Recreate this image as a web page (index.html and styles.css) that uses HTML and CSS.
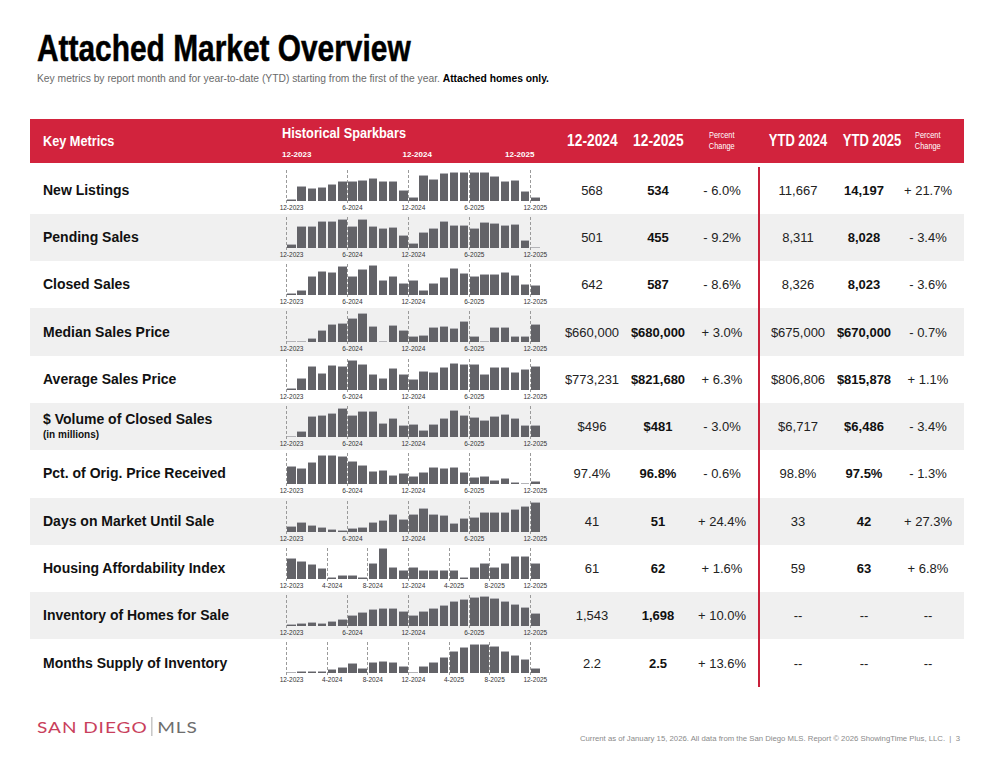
FILE: index.html
```html
<!DOCTYPE html>
<html lang="en">
<head>
<meta charset="utf-8">
<title>Attached Market Overview</title>
<link rel="stylesheet" href="styles.css">
</head>
<body>
<div class="page">
  <h1 class="title"><span>Attached Market Overview</span></h1>
  <p class="subtitle">Key metrics by report month and for year-to-date (YTD) starting from the first of the year. <b>Attached homes only.</b></p>

  <div class="table">
    <div class="grid thead">
      <div class="th-key"><span class="cx">Key Metrics</span></div>
      <div class="th-spark">
        <div class="th-spark-title"><span class="cx">Historical Sparkbars</span></div>
        <div class="th-ticks"><span>12-2023</span><span>12-2024</span><span>12-2025</span></div>
      </div>
      <div class="th-col"><span class="cx">12-2024</span></div>
      <div class="th-col"><span class="cx">12-2025</span></div>
      <div class="th-pct"><span class="cx">Percent<br>Change</span></div>
      <div></div><div></div>
      <div class="th-col ytd"><span class="cx">YTD 2024</span></div>
      <div class="th-col ytd"><span class="cx">YTD 2025</span></div>
      <div class="th-pct"><span class="cx">Percent<br>Change</span></div>
    </div>

    <div class="tbody">
      <div class="grid row">
        <div class="name">New Listings</div>
        <div class="spark">
          <div class="bars"><span class="m" style="height:1.7px"></span><span style="height:15px"></span><span style="height:13px"></span><span style="height:14px"></span><span style="height:16.7px"></span><span style="height:19.3px"></span><span class="m" style="height:19.3px"></span><span style="height:20.3px"></span><span style="height:22.7px"></span><span style="height:19.3px"></span><span style="height:20px"></span><span style="height:10.7px"></span><span class="m" style="height:4px"></span><span style="height:26px"></span><span style="height:21.7px"></span><span style="height:28px"></span><span style="height:28.3px"></span><span style="height:29px"></span><span class="m" style="height:29px"></span><span style="height:28.7px"></span><span style="height:24.3px"></span><span style="height:20px"></span><span style="height:20.7px"></span><span style="height:10px"></span><span class="m" style="height:3.3px"></span></div>
          <div class="ticks"><span class="t0">12-2023</span><span class="t6">6-2024</span><span class="t12">12-2024</span><span class="t18">6-2025</span><span class="t24">12-2025</span></div>
        </div>
        <div class="v">568</div><div class="v b">534</div><div class="v">- 6.0%</div><div></div><div class="vline"></div><div class="v">11,667</div><div class="v b">14,197</div><div class="v">+ 21.7%</div>
      </div>

      <div class="grid row">
        <div class="name">Pending Sales</div>
        <div class="spark">
          <div class="bars"><span class="m" style="height:3.7px"></span><span style="height:21.7px"></span><span style="height:22px"></span><span style="height:26.7px"></span><span style="height:27.3px"></span><span style="height:29px"></span><span class="m" style="height:21.7px"></span><span style="height:29.3px"></span><span style="height:22px"></span><span style="height:20px"></span><span style="height:20.7px"></span><span style="height:13.3px"></span><span class="m" style="height:5.3px"></span><span style="height:16.3px"></span><span style="height:20.3px"></span><span style="height:27.3px"></span><span style="height:23px"></span><span style="height:23px"></span><span class="m" style="height:20.3px"></span><span style="height:26px"></span><span style="height:25.3px"></span><span style="height:23px"></span><span style="height:23.7px"></span><span style="height:8px"></span><span class="m" style="height:1.3px"></span></div>
          <div class="ticks"><span class="t0">12-2023</span><span class="t6">6-2024</span><span class="t12">12-2024</span><span class="t18">6-2025</span><span class="t24">12-2025</span></div>
        </div>
        <div class="v">501</div><div class="v b">455</div><div class="v">- 9.2%</div><div></div><div class="vline"></div><div class="v">8,311</div><div class="v b">8,028</div><div class="v">- 3.4%</div>
      </div>

      <div class="grid row">
        <div class="name">Closed Sales</div>
        <div class="spark">
          <div class="bars"><span class="m" style="height:2px"></span><span style="height:5px"></span><span style="height:19.3px"></span><span style="height:23.7px"></span><span style="height:22.7px"></span><span style="height:29.3px"></span><span class="m" style="height:19px"></span><span style="height:26px"></span><span style="height:29.7px"></span><span style="height:15.3px"></span><span style="height:18.7px"></span><span style="height:12px"></span><span class="m" style="height:14.7px"></span><span style="height:5px"></span><span style="height:12px"></span><span style="height:17.7px"></span><span style="height:26.7px"></span><span style="height:21.7px"></span><span class="m" style="height:19px"></span><span style="height:20.7px"></span><span style="height:21.3px"></span><span style="height:23px"></span><span style="height:20.3px"></span><span style="height:10.7px"></span><span class="m" style="height:9.7px"></span></div>
          <div class="ticks"><span class="t0">12-2023</span><span class="t6">6-2024</span><span class="t12">12-2024</span><span class="t18">6-2025</span><span class="t24">12-2025</span></div>
        </div>
        <div class="v">642</div><div class="v b">587</div><div class="v">- 8.6%</div><div></div><div class="vline"></div><div class="v">8,326</div><div class="v b">8,023</div><div class="v">- 3.6%</div>
      </div>

      <div class="grid row">
        <div class="name">Median Sales Price</div>
        <div class="spark">
          <div class="bars"><span class="m" style="height:1.7px"></span><span style="height:1.7px"></span><span style="height:4.3px"></span><span style="height:12.7px"></span><span style="height:18.3px"></span><span style="height:19.7px"></span><span class="m" style="height:24.7px"></span><span style="height:29.3px"></span><span style="height:16px"></span><span style="height:1.7px"></span><span style="height:17.7px"></span><span style="height:12.7px"></span><span class="m" style="height:6.7px"></span><span style="height:7.7px"></span><span style="height:15.3px"></span><span style="height:16.7px"></span><span style="height:14px"></span><span style="height:21px"></span><span class="m" style="height:6.7px"></span><span style="height:1.7px"></span><span style="height:15.3px"></span><span style="height:15.3px"></span><span style="height:6.7px"></span><span style="height:6.7px"></span><span class="m" style="height:18.3px"></span></div>
          <div class="ticks"><span class="t0">12-2023</span><span class="t6">6-2024</span><span class="t12">12-2024</span><span class="t18">6-2025</span><span class="t24">12-2025</span></div>
        </div>
        <div class="v">$660,000</div><div class="v b">$680,000</div><div class="v">+ 3.0%</div><div></div><div class="vline"></div><div class="v">$675,000</div><div class="v b">$670,000</div><div class="v">- 0.7%</div>
      </div>

      <div class="grid row">
        <div class="name">Average Sales Price</div>
        <div class="spark">
          <div class="bars"><span class="m" style="height:2px"></span><span style="height:11.7px"></span><span style="height:24px"></span><span style="height:17px"></span><span style="height:24.3px"></span><span style="height:24px"></span><span class="m" style="height:29.7px"></span><span style="height:25.7px"></span><span style="height:15.3px"></span><span style="height:12px"></span><span style="height:22px"></span><span style="height:15.3px"></span><span class="m" style="height:10.7px"></span><span style="height:19px"></span><span style="height:17.7px"></span><span style="height:23px"></span><span style="height:27px"></span><span style="height:26px"></span><span class="m" style="height:25.7px"></span><span style="height:15.7px"></span><span style="height:22.3px"></span><span style="height:23px"></span><span style="height:18px"></span><span style="height:21px"></span><span class="m" style="height:23.7px"></span></div>
          <div class="ticks"><span class="t0">12-2023</span><span class="t6">6-2024</span><span class="t12">12-2024</span><span class="t18">6-2025</span><span class="t24">12-2025</span></div>
        </div>
        <div class="v">$773,231</div><div class="v b">$821,680</div><div class="v">+ 6.3%</div><div></div><div class="vline"></div><div class="v">$806,806</div><div class="v b">$815,878</div><div class="v">+ 1.1%</div>
      </div>

      <div class="grid row">
        <div class="name">$ Volume of Closed Sales<small>(in millions)</small></div>
        <div class="spark">
          <div class="bars"><span class="m" style="height:1.3px"></span><span style="height:5.7px"></span><span style="height:20.7px"></span><span style="height:22.3px"></span><span style="height:23.7px"></span><span style="height:29.3px"></span><span class="m" style="height:21.7px"></span><span style="height:26.3px"></span><span style="height:26.3px"></span><span style="height:13.7px"></span><span style="height:19.3px"></span><span style="height:12.3px"></span><span class="m" style="height:13.3px"></span><span style="height:6.7px"></span><span style="height:12.7px"></span><span style="height:18.7px"></span><span style="height:27px"></span><span style="height:22.3px"></span><span class="m" style="height:20px"></span><span style="height:17.3px"></span><span style="height:21.3px"></span><span style="height:22.7px"></span><span style="height:19.3px"></span><span style="height:12px"></span><span class="m" style="height:12px"></span></div>
          <div class="ticks"><span class="t0">12-2023</span><span class="t6">6-2024</span><span class="t12">12-2024</span><span class="t18">6-2025</span><span class="t24">12-2025</span></div>
        </div>
        <div class="v">$496</div><div class="v b">$481</div><div class="v">- 3.0%</div><div></div><div class="vline"></div><div class="v">$6,717</div><div class="v b">$6,486</div><div class="v">- 3.4%</div>
      </div>

      <div class="grid row">
        <div class="name">Pct. of Orig. Price Received</div>
        <div class="spark">
          <div class="bars"><span class="m" style="height:18.7px"></span><span style="height:16px"></span><span style="height:22.7px"></span><span style="height:29px"></span><span style="height:29.3px"></span><span style="height:28.7px"></span><span class="m" style="height:23px"></span><span style="height:19.7px"></span><span style="height:13px"></span><span style="height:14px"></span><span style="height:9.7px"></span><span style="height:11.7px"></span><span class="m" style="height:8.3px"></span><span style="height:12.3px"></span><span style="height:17.3px"></span><span style="height:16.3px"></span><span style="height:17.3px"></span><span style="height:12px"></span><span class="m" style="height:7px"></span><span style="height:8.7px"></span><span style="height:4.3px"></span><span style="height:6px"></span><span style="height:2.3px"></span><span style="height:1px"></span><span class="m" style="height:3.7px"></span></div>
          <div class="ticks"><span class="t0">12-2023</span><span class="t6">6-2024</span><span class="t12">12-2024</span><span class="t18">6-2025</span><span class="t24">12-2025</span></div>
        </div>
        <div class="v">97.4%</div><div class="v b">96.8%</div><div class="v">- 0.6%</div><div></div><div class="vline"></div><div class="v">98.8%</div><div class="v b">97.5%</div><div class="v">- 1.3%</div>
      </div>

      <div class="grid row">
        <div class="name">Days on Market Until Sale</div>
        <div class="spark">
          <div class="bars"><span class="m" style="height:6px"></span><span style="height:9.3px"></span><span style="height:6.3px"></span><span style="height:4.7px"></span><span style="height:3px"></span><span style="height:1.3px"></span><span class="m" style="height:3.3px"></span><span style="height:5px"></span><span style="height:9.3px"></span><span style="height:11.3px"></span><span style="height:17.3px"></span><span style="height:13px"></span><span class="m" style="height:17.3px"></span><span style="height:24px"></span><span style="height:17.7px"></span><span style="height:16.3px"></span><span style="height:8.7px"></span><span style="height:14px"></span><span class="m" style="height:14.7px"></span><span style="height:19.3px"></span><span style="height:19.7px"></span><span style="height:19.3px"></span><span style="height:22.3px"></span><span style="height:25.7px"></span><span class="m" style="height:29.3px"></span></div>
          <div class="ticks"><span class="t0">12-2023</span><span class="t6">6-2024</span><span class="t12">12-2024</span><span class="t18">6-2025</span><span class="t24">12-2025</span></div>
        </div>
        <div class="v">41</div><div class="v b">51</div><div class="v">+ 24.4%</div><div></div><div class="vline"></div><div class="v">33</div><div class="v b">42</div><div class="v">+ 27.3%</div>
      </div>

      <div class="grid row">
        <div class="name">Housing Affordability Index</div>
        <div class="spark">
          <div class="bars"><span class="m" style="height:20.7px"></span><span style="height:17.7px"></span><span style="height:14.7px"></span><span style="height:11.3px"></span><span class="m" style="height:1.7px"></span><span style="height:4.3px"></span><span style="height:4.3px"></span><span style="height:1.7px"></span><span class="m" style="height:15.7px"></span><span style="height:30.7px"></span><span style="height:12.3px"></span><span style="height:8.7px"></span><span class="m" style="height:12.3px"></span><span style="height:8.7px"></span><span style="height:8.7px"></span><span style="height:8.7px"></span><span class="m" style="height:8.7px"></span><span style="height:1.7px"></span><span style="height:12.3px"></span><span style="height:15.7px"></span><span class="m" style="height:12.3px"></span><span style="height:15.7px"></span><span style="height:23.3px"></span><span style="height:23.3px"></span><span class="m" style="height:15.7px"></span></div>
          <div class="ticks"><span class="t0">12-2023</span><span class="t4">4-2024</span><span class="t8">8-2024</span><span class="t12">12-2024</span><span class="t16">4-2025</span><span class="t20">8-2025</span><span class="t24">12-2025</span></div>
        </div>
        <div class="v">61</div><div class="v b">62</div><div class="v">+ 1.6%</div><div></div><div class="vline"></div><div class="v">59</div><div class="v b">63</div><div class="v">+ 6.8%</div>
      </div>

      <div class="grid row">
        <div class="name">Inventory of Homes for Sale</div>
        <div class="spark">
          <div class="bars"><span class="m" style="height:1.7px"></span><span style="height:3px"></span><span style="height:3.7px"></span><span style="height:3.3px"></span><span style="height:5px"></span><span style="height:7.3px"></span><span class="m" style="height:11px"></span><span style="height:13.7px"></span><span style="height:17.3px"></span><span style="height:18px"></span><span style="height:18px"></span><span style="height:15px"></span><span class="m" style="height:11px"></span><span style="height:15px"></span><span style="height:18px"></span><span style="height:21.3px"></span><span style="height:25px"></span><span style="height:27.3px"></span><span class="m" style="height:29.3px"></span><span style="height:29.7px"></span><span style="height:28px"></span><span style="height:25px"></span><span style="height:22.3px"></span><span style="height:19.3px"></span><span class="m" style="height:13px"></span></div>
          <div class="ticks"><span class="t0">12-2023</span><span class="t6">6-2024</span><span class="t12">12-2024</span><span class="t18">6-2025</span><span class="t24">12-2025</span></div>
        </div>
        <div class="v">1,543</div><div class="v b">1,698</div><div class="v">+ 10.0%</div><div></div><div class="vline"></div><div class="v">--</div><div class="v">--</div><div class="v">--</div>
      </div>

      <div class="grid row">
        <div class="name">Months Supply of Inventory</div>
        <div class="spark">
          <div class="bars"><span class="m" style="height:1px"></span><span style="height:2px"></span><span style="height:2.7px"></span><span style="height:2.7px"></span><span class="m" style="height:4px"></span><span style="height:6.3px"></span><span style="height:10.7px"></span><span style="height:5.7px"></span><span class="m" style="height:11.3px"></span><span style="height:12px"></span><span style="height:11.3px"></span><span style="height:7px"></span><span class="m" style="height:1px"></span><span style="height:7.3px"></span><span style="height:11.7px"></span><span style="height:16.7px"></span><span class="m" style="height:22.3px"></span><span style="height:26px"></span><span style="height:29px"></span><span style="height:29.7px"></span><span class="m" style="height:27.3px"></span><span style="height:22.7px"></span><span style="height:18.7px"></span><span style="height:14px"></span><span class="m" style="height:5px"></span></div>
          <div class="ticks"><span class="t0">12-2023</span><span class="t4">4-2024</span><span class="t8">8-2024</span><span class="t12">12-2024</span><span class="t16">4-2025</span><span class="t20">8-2025</span><span class="t24">12-2025</span></div>
        </div>
        <div class="v">2.2</div><div class="v b">2.5</div><div class="v">+ 13.6%</div><div></div><div class="vline"></div><div class="v">--</div><div class="v">--</div><div class="v">--</div>
      </div>
    </div>
  </div>

  <div class="footer">
    <div class="logo"><span class="sd">SAN DIEGO</span><span class="sep"></span><span class="mls">MLS</span></div>
    <div class="note">Current as of January 15, 2026. All data from the San Diego MLS. Report © 2026 ShowingTime Plus, LLC. &nbsp;|&nbsp; 3</div>
  </div>
</div>
</body>
</html>
```

FILE: styles.css
```css
* { box-sizing: border-box; }

body {
  margin: 0;
  background: #fff;
  font-family: "Liberation Sans", Arial, sans-serif;
  color: #222;
}

.page {
  width: 987px;
  height: 759px;
  padding-top: 30px;
  overflow: hidden;
}

.title {
  margin: 0 0 0 37px;
  font-size: 36px;
  line-height: 37px;
  font-weight: 700;
  color: #000;
  white-space: nowrap;
  -webkit-text-stroke: 0.5px #000;
}

.title span {
  display: inline-block;
  transform: scaleX(0.83);
  transform-origin: left center;
}

.cx {
  display: inline-block;
  transform: scaleX(0.85);
}

.subtitle {
  margin: 5.5px 0 0 37px;
  font-size: 10.3px;
  line-height: 12px;
  color: #6a6a6a;
}

.subtitle b { color: #000; }

.table {
  margin: 34.5px 0 0 30px;
  width: 934px;
}

.grid {
  display: grid;
  grid-template-columns: 250px 278px 68px 64px 64px 4px 2px 76px 56px 72px;
}

.thead {
  height: 44px;
  background: #d2233d;
  color: #fff;
  align-items: center;
  margin-bottom: 3.5px;
  font-weight: 700;
}

.th-key {
  padding-left: 13px;
  font-size: 15.5px;
}

.th-key .cx {
  transform: scaleX(0.82);
  transform-origin: left center;
}

.th-spark {
  align-self: stretch;
  padding: 6px 0 0 2px;
}

.th-spark-title {
  font-size: 15px;
  line-height: 16px;
  white-space: nowrap;
}

.th-spark-title .cx { transform-origin: left center; }

.th-ticks {
  display: grid;
  grid-template-columns: 120.5px 102.5px auto;
  margin-top: 9px;
  font-size: 8px;
  line-height: 10px;
}

.th-col {
  text-align: center;
  font-size: 16px;
  white-space: nowrap;
}

.th-col .cx { transform: scaleX(0.86); }

.th-col.ytd .cx { transform: scaleX(0.81); }

.th-pct {
  text-align: center;
  font-size: 9px;
  line-height: 11px;
  font-weight: 400;
}

.th-pct .cx { transform: scaleX(0.82); }

.row {
  height: 47.3px;
  align-items: center;
}

.tbody .row:nth-child(even) { background: #f0f0f0; }

.name {
  padding-left: 13px;
  font-size: 14px;
  line-height: 17px;
  font-weight: 700;
  color: #111;
}

.name small {
  display: block;
  font-size: 10px;
  line-height: 14px;
}

.spark {
  align-self: start;
  padding: 3px 0 0 7.3px;
}

.bars,
.ticks {
  display: grid;
  grid-template-columns: repeat(25, 8.5px);
  column-gap: 1.67px;
}

.bars {
  height: 31px;
  align-items: end;
}

.bars span {
  display: block;
  background: #636368;
  border-top: 1px solid #b4b4b8;
}

.bars .m { position: relative; }

.bars .m::before {
  content: "";
  position: absolute;
  left: -1.2px;
  bottom: -2px;
  height: 33px;
  border-left: 1px dashed #9a9a9a;
}

.ticks {
  margin-top: 3px;
  height: 8px;
  font-size: 6.5px;
  line-height: 8px;
  color: #333;
}

.ticks span {
  display: flex;
  justify-content: center;
  white-space: nowrap;
  grid-row: 1;
}

.ticks .t0 { grid-column: 1; }
.ticks .t4 { grid-column: 5; }
.ticks .t6 { grid-column: 7; }
.ticks .t8 { grid-column: 9; }
.ticks .t12 { grid-column: 13; }
.ticks .t16 { grid-column: 17; }
.ticks .t18 { grid-column: 19; }
.ticks .t20 { grid-column: 21; }
.ticks .t24 { grid-column: 25; }

.v {
  text-align: center;
  font-size: 13px;
  color: #222;
  white-space: nowrap;
}

.v.b {
  font-weight: 700;
  color: #111;
}

.vline {
  align-self: stretch;
  background: #c8203a;
}

.footer {
  display: flex;
  justify-content: space-between;
  align-items: flex-start;
  margin-top: 30px;
  padding: 0 27px 0 37px;
}

.logo {
  display: flex;
  align-items: center;
  height: 20px;
  font-family: "Lato", "Liberation Sans", sans-serif;
  font-weight: 400;
  font-size: 16px;
  line-height: 20px;
  letter-spacing: 0.8px;
  transform: scaleX(1.19);
  transform-origin: left center;
}

.sd { color: #c93f5c; }

.sep {
  width: 1px;
  height: 19px;
  background: #b8b8b8;
  margin: 0 4px 0 3px;
}

.mls { color: #6e6e6e; }

.note {
  margin-top: 16.8px;
  font-size: 7.75px;
  line-height: 10px;
  color: #8a8a8a;
  white-space: nowrap;
}
```
